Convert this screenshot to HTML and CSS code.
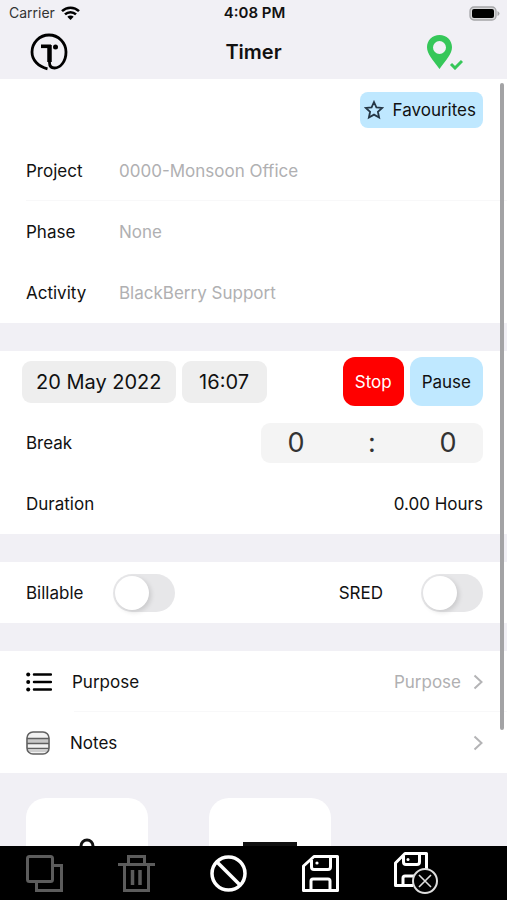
FILE: index.html
```html
<!DOCTYPE html>
<html lang="en">
<head>
<meta charset="utf-8">
<meta name="viewport" content="width=device-width, initial-scale=1">
<title>Timer</title>
<link rel="stylesheet" href="styles.css">
</head>
<body>
<div class="app">
  <header class="header">
    <div class="status">
      <span class="carrier">Carrier
        <svg width="19" height="14" viewBox="0 0 19 14" aria-hidden="true"><g fill="none" stroke="#000" stroke-width="2.5"><path d="M1 5.200a12.200 12.200 0 0 1 17 0"/><path d="M4 8.400a7.800 7.800 0 0 1 11 0"/></g><path d="M6.300 10.700a4.600 4.600 0 0 1 6.400 0L9.500 14z"/></svg>
      </span>
      <span class="clock">4:08 PM</span>
      <svg class="battery" width="31" height="15" viewBox="0 0 31 15" aria-hidden="true"><rect x="1" y="1" width="26" height="13" rx="4" fill="#d8d8da" stroke="#a5a5a8" stroke-width="1.300"/><rect x="3" y="3" width="22" height="9" rx="2"/><path d="M28.500 5q2 1 2 2.500t-2 2.500z" fill="#a5a5a8"/></svg>
    </div>
    <div class="nav">
      <svg width="38" height="38" viewBox="0 0 38 38" role="img" aria-label="Timer logo"><g fill="none" stroke="#000"><path d="M17.500 35.800C8 33.500 2 27 2 19a17 17 0 0 1 34 0c0 10-6 16-11.500 16-3.500 0-5-2.300-5-5.500V13" stroke-width="2.800"/><path d="M11 13.300h10" stroke-width="3.600"/><path d="M19.500 12v17" stroke-width="4.500"/></g><circle cx="25.500" cy="14" r="2.500"/></svg>
      <h1 class="title">Timer</h1>
      <svg class="pin" width="37" height="36" viewBox="0 0 37 36" role="img" aria-label="Location found"><path fill="#36c759" fill-rule="evenodd" d="M13.500 1C6.300 1 1 6.400 1 13.200 1 20 7 26 13.500 35 20 26 26 20 26 13.200 26 6.400 20.700 1 13.500 1zm0 6a6.500 6.500 0 1 1 0 13 6.500 6.500 0 0 1 0-13z"/><path d="m25 30 4 4 7-7" fill="none" stroke="#36c759" stroke-width="3"/></svg>
    </div>
  </header>

  <main class="content">
    <section class="group">
      <div class="row row-end">
        <button class="favourites" type="button">
          <svg width="20" height="20" viewBox="0 0 20 20" aria-hidden="true"><path d="m10 2 2.400 5.300 5.800.6-4.300 3.900 1.200 5.700L10 14.600l-5.100 2.900 1.200-5.700-4.300-3.900 5.800-.6z" fill="none" stroke="#253746" stroke-width="1.800"/></svg>
          Favourites
        </button>
      </div>
      <div class="row line"><label class="name" for="project">Project</label><input class="field" id="project" value="0000-Monsoon Office"></div>
      <div class="row"><label class="name" for="phase">Phase</label><input class="field" id="phase" value="None"></div>
      <div class="row"><label class="name" for="activity">Activity</label><input class="field" id="activity" value="BlackBerry Support"></div>
    </section>

    <section class="group">
      <div class="row row-time">
        <button class="picker" type="button">20 May 2022</button>
        <button class="picker" type="button">16:07</button>
        <button class="action stop" type="button">Stop</button>
        <button class="action pause" type="button">Pause</button>
      </div>
      <div class="row spread">
        <span>Break</span>
        <div class="break">
          <input class="digit" aria-label="Break hours" inputmode="numeric" value="0">
          <span>:</span>
          <input class="digit" aria-label="Break minutes" inputmode="numeric" value="0">
        </div>
      </div>
      <div class="row spread"><span>Duration</span><span>0.00 Hours</span></div>
    </section>

    <section class="group">
      <div class="row spread">
        <div class="toggle"><label for="billable">Billable</label><input class="switch" id="billable" type="checkbox" role="switch"></div>
        <div class="toggle toggle-wide"><label for="sred">SRED</label><input class="switch" id="sred" type="checkbox" role="switch"></div>
      </div>
    </section>

    <section class="group">
      <a class="row link line" href="#purpose">
        <svg width="26" height="20" viewBox="0 0 26 20" aria-hidden="true"><path d="M8 2.500h17M8 10h17M8 17.500h17" stroke="#000" stroke-width="2.500" stroke-linecap="round"/><circle cx="2.200" cy="2.500" r="2"/><circle cx="2.200" cy="10" r="2"/><circle cx="2.200" cy="17.500" r="2"/></svg>
        <span>Purpose</span>
        <span class="hint">Purpose</span>
        <svg class="chevron" width="10" height="16" viewBox="0 0 10 16" aria-hidden="true"><path d="m1.500 1.500 7 6.500-7 6.500" fill="none" stroke="#b4b4b6" stroke-width="2"/></svg>
      </a>
      <a class="row link" href="#notes">
        <svg width="24" height="24" viewBox="0 0 24 24" aria-hidden="true"><rect x="1" y="1" width="22" height="22" rx="6" fill="#f2f2f2" stroke="#606060" stroke-width="1.600"/><path d="M2 8h20v4H2z" fill="#c8c8c8"/><path d="M1 7.500h22M1 12.500h22M1 17.500h22" stroke="#606060" stroke-width="1.400"/><path d="M3 20h18" stroke="#aaa"/></svg>
        <span>Notes</span>
        <span class="hint"></span>
        <svg class="chevron" width="10" height="16" viewBox="0 0 10 16" aria-hidden="true"><path d="m1.500 1.500 7 6.500-7 6.500" fill="none" stroke="#b4b4b6" stroke-width="2"/></svg>
      </a>
    </section>

    <section class="cards">
      <div class="card"><svg width="60" height="60" viewBox="0 0 60 60" aria-hidden="true"><circle cx="30" cy="9" r="6" fill="none" stroke="#111" stroke-width="3"/></svg></div>
      <div class="card"><svg width="60" height="60" viewBox="0 0 60 60" aria-hidden="true"><path d="M3 5h54v50H3z" fill="#111"/></svg></div>
    </section>
    <div class="scrollbar"></div>
  </main>

  <footer class="toolbar">
    <button class="tool" type="button" aria-label="Copy"><svg width="37" height="37" viewBox="0 0 37 37" fill="none" stroke="#5c5c5c" stroke-width="3"><rect x="1.500" y="1.500" width="25" height="25" rx="2"/><path d="M27 10.500h8.500v25h-25V27"/></svg></button>
    <button class="tool" type="button" aria-label="Delete"><svg width="37" height="37" viewBox="0 0 37 37" fill="none" stroke="#5c5c5c" stroke-width="3"><path d="M0 9.500h37M10.500 9V1.500h16V9M6.500 10v25.500h24V10"/><path d="M14.500 15v15M22 15v15" stroke-width="3.500"/></svg></button>
    <button class="tool" type="button" aria-label="Cancel"><svg width="37" height="37" viewBox="0 0 37 37" fill="none" stroke="#fff" stroke-width="3.500"><circle cx="18.500" cy="18.500" r="16.500"/><path d="m7 7 23 23"/></svg></button>
    <button class="tool" type="button" aria-label="Save"><svg width="37" height="37" viewBox="0 0 37 37" fill="none" stroke="#fff" stroke-width="3" stroke-linejoin="round"><path d="M12 1.500h23.500v34h-34V11z"/><path d="M9.500 5v7q0 2.500 2.500 2.500h14q2.500 0 2.500-2.500V2M9 35V26q0-2 2-2h15q2 0 2 2v9"/><circle cx="15" cy="8" r="1.600" fill="#fff" stroke="none"/></svg></button>
    <button class="tool" type="button" aria-label="Save and close"><svg width="44" height="42" viewBox="0 0 44 42" fill="none" stroke="#fff" stroke-width="3" stroke-linejoin="round"><path d="M19 33.500H1.500V11L11 1.500h21.500V17"/><path d="M9.500 4v6q0 2.500 2.500 2.500h11q2.500 0 2.500-2.500V2M9 33v-7q0-2 2-2h9"/><circle cx="14" cy="7.500" r="1.500" fill="#fff" stroke="none"/><circle cx="31" cy="29" r="12" fill="#000" stroke="#ddd" stroke-width="2"/><path d="m25 23 12 12M37 23 25 35" stroke="#ddd" stroke-width="1.600"/></svg></button>
  </footer>
</div>
</body>
</html>
```
FILE: styles.css
```css
* { box-sizing: border-box; }

body {
  margin: 0;
  background: #f1f0f5;
  color: #111;
  font: 17px/20px Inter, "Liberation Sans", sans-serif;
}

button, input {
  margin: 0;
  padding: 0;
  border: 0;
  color: inherit;
  font: inherit;
}

svg { display: block; flex: none; }

.app {
  display: flex;
  flex-direction: column;
  height: 100vh;
}

.header { padding-bottom: 8px; }

.status {
  display: grid;
  grid-template-columns: 1fr auto 1fr;
  align-items: center;
  height: 26px;
  padding: 0 7px 0 9px;
  font-size: 14px;
}

.carrier {
  display: flex;
  align-items: center;
  gap: 6px;
  color: #333;
}

.clock { font-size: 15px; font-weight: 600; }

.battery { justify-self: end; }

.nav {
  display: grid;
  grid-template-columns: 1fr auto 1fr;
  align-items: center;
  height: 45px;
  padding: 7px 44px 0 30px;
}

.title {
  margin: 0;
  padding-left: 14px;
  font-size: 20px;
  line-height: 24px;
  font-weight: 600;
}

.pin { justify-self: end; }

.content {
  position: relative;
  display: flex;
  flex: 1;
  flex-direction: column;
  gap: 28px;
  min-height: 0;
  overflow: hidden;
}

.group { flex: none; background: #fff; }

.row {
  position: relative;
  display: flex;
  align-items: center;
  height: 61px;
  padding: 0 24px 0 26px;
}

.line::after {
  content: "";
  position: absolute;
  right: 0;
  bottom: 0;
  left: 26px;
  height: 1px;
  background: #f8f8f9;
}

.row-end { justify-content: flex-end; }
.spread { justify-content: space-between; }

.favourites {
  display: flex;
  align-items: center;
  gap: 9px;
  height: 36px;
  padding: 0 7px 0 4px;
  border-radius: 8px;
  background: #bfe8ff;
}

.name { flex: none; width: 93px; }

.field {
  flex: 1;
  min-width: 0;
  background: none;
  color: #b0b0b2;
}

.row-time { gap: 6px; padding-left: 22px; }

.picker {
  min-width: 85px;
  height: 42px;
  padding: 0 14px;
  border-radius: 9px;
  background: #eee;
  font-size: 20px;
}

.action {
  height: 49px;
  padding: 0 12px;
  border-radius: 12px;
}

.stop { margin-left: auto; background: #f00; color: #fff; }
.pause { background: #bfe8ff; }

.break {
  display: flex;
  align-items: center;
  justify-content: space-between;
  width: 222px;
  height: 40px;
  padding: 0 22px;
  border-radius: 9px;
  background: #f4f4f4;
  color: #333;
  font-size: 27px;
}

.digit {
  width: 26px;
  background: none;
  text-align: center;
}

.toggle {
  display: flex;
  align-items: center;
  gap: 30px;
}

.toggle-wide { gap: 38px; }

.switch {
  display: flex;
  align-items: center;
  appearance: none;
  width: 62px;
  height: 38px;
  padding: 2px;
  border-radius: 19px;
  background: #e7e7e9;
}

.switch::before {
  content: "";
  width: 34px;
  height: 34px;
  border-radius: 50%;
  background: #fff;
  box-shadow: 2px 2px 5px #0002;
}

.switch:checked { justify-content: flex-end; background: #36c759; }

.link {
  gap: 20px;
  color: inherit;
  text-decoration: none;
}

.hint { margin-left: auto; color: #b0b0b2; }
.chevron { margin-left: -8px; }

.link.line::after { left: 74px; }

.cards {
  display: flex;
  flex: none;
  gap: 61px;
  margin-top: -3px;
  padding: 0 26px;
}

.card {
  display: flex;
  justify-content: center;
  width: 122px;
  height: 122px;
  padding-top: 39px;
  border-radius: 20px;
  background: #fff;
}

.scrollbar {
  position: absolute;
  top: 4px;
  right: 3px;
  bottom: 116px;
  width: 4px;
  border-radius: 2px;
  background: #a3a3a5;
}

.toolbar {
  display: flex;
  flex: none;
  align-items: center;
  gap: 55px;
  height: 54px;
  padding: 0 26px;
  background: #000;
}

.tool { background: none; }
```
